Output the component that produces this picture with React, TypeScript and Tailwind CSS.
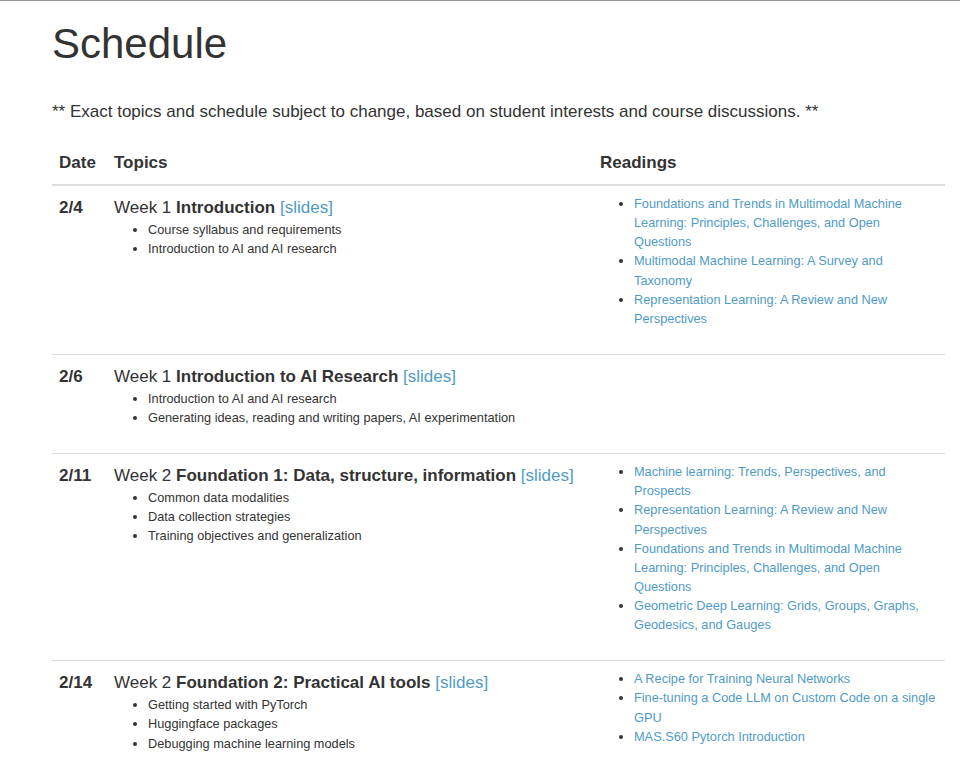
import React from "react";

type Row = {
  date: string;
  week: string;
  title: string;
  topics: string[];
  readings: string[];
};

const rows: Row[] = [
  {
    date: "2/4",
    week: "Week 1",
    title: "Introduction",
    topics: ["Course syllabus and requirements", "Introduction to AI and AI research"],
    readings: [
      "Foundations and Trends in Multimodal Machine Learning: Principles, Challenges, and Open Questions",
      "Multimodal Machine Learning: A Survey and Taxonomy",
      "Representation Learning: A Review and New Perspectives",
    ],
  },
  {
    date: "2/6",
    week: "Week 1",
    title: "Introduction to AI Research",
    topics: [
      "Introduction to AI and AI research",
      "Generating ideas, reading and writing papers, AI experimentation",
    ],
    readings: [],
  },
  {
    date: "2/11",
    week: "Week 2",
    title: "Foundation 1: Data, structure, information",
    topics: [
      "Common data modalities",
      "Data collection strategies",
      "Training objectives and generalization",
    ],
    readings: [
      "Machine learning: Trends, Perspectives, and Prospects",
      "Representation Learning: A Review and New Perspectives",
      "Foundations and Trends in Multimodal Machine Learning: Principles, Challenges, and Open Questions",
      "Geometric Deep Learning: Grids, Groups, Graphs, Geodesics, and Gauges",
    ],
  },
  {
    date: "2/14",
    week: "Week 2",
    title: "Foundation 2: Practical AI tools",
    topics: [
      "Getting started with PyTorch",
      "Huggingface packages",
      "Debugging machine learning models",
    ],
    readings: [
      "A Recipe for Training Neural Networks",
      "Fine-tuning a Code LLM on Custom Code on a single GPU",
      "MAS.S60 Pytorch Introduction",
    ],
  },
];

export default function App() {
  return (
    <div
      className="min-h-[771px] w-[960px] border-t border-[#999] bg-white text-[#333]"
      style={{ fontFamily: '"Liberation Sans", Arial, sans-serif' }}
    >
      <div className="pl-[52px] pr-[15px]">
        <h1 className="mt-[20px] text-[42px] leading-[46px] font-normal">Schedule</h1>
        <p className="mt-[33px] text-[17px] leading-[24px]">
          ** Exact topics and schedule subject to change, based on student interests and course discussions. **
        </p>
        <table className="mt-[19px] w-[893px] table-fixed border-collapse text-[17px] leading-[24px]">
          <thead>
            <tr className="border-b-2 border-[#ddd]">
              <th className="w-[55px] px-[7px] pt-2 pb-[9px] text-left font-bold">Date</th>
              <th className="w-[485px] px-[7px] pt-2 pb-[9px] text-left font-bold">Topics</th>
              <th className="px-2 pt-2 pb-[9px] text-left font-bold">Readings</th>
            </tr>
          </thead>
          <tbody>
            {rows.map((r, i) => (
              <tr key={r.date} className={i > 0 ? "border-t border-[#ddd]" : ""}>
                <td className="px-[7px] pt-[10px] pb-[26px] align-top font-bold">{r.date}</td>
                <td className="px-[7px] pt-[10px] pb-[26px] align-top">
                  <div>
                    {r.week} <b>{r.title}</b> <a className="text-[#4f9bc6]">[slides]</a>
                  </div>
                  <ul className="list-disc pl-[34px] text-[12.75px] leading-[19.125px]">
                    {r.topics.map((t) => (
                      <li key={t}>{t}</li>
                    ))}
                  </ul>
                </td>
                <td className="px-2 pt-[8px] pb-[26px] align-top">
                  <ul className="list-disc pl-[34px] text-[12.75px] leading-[19.125px]">
                    {r.readings.map((t) => (
                      <li key={t}>
                        <a className="text-[#4f9bc6]">{t}</a>
                      </li>
                    ))}
                  </ul>
                </td>
              </tr>
            ))}
          </tbody>
        </table>
      </div>
    </div>
  );
}
